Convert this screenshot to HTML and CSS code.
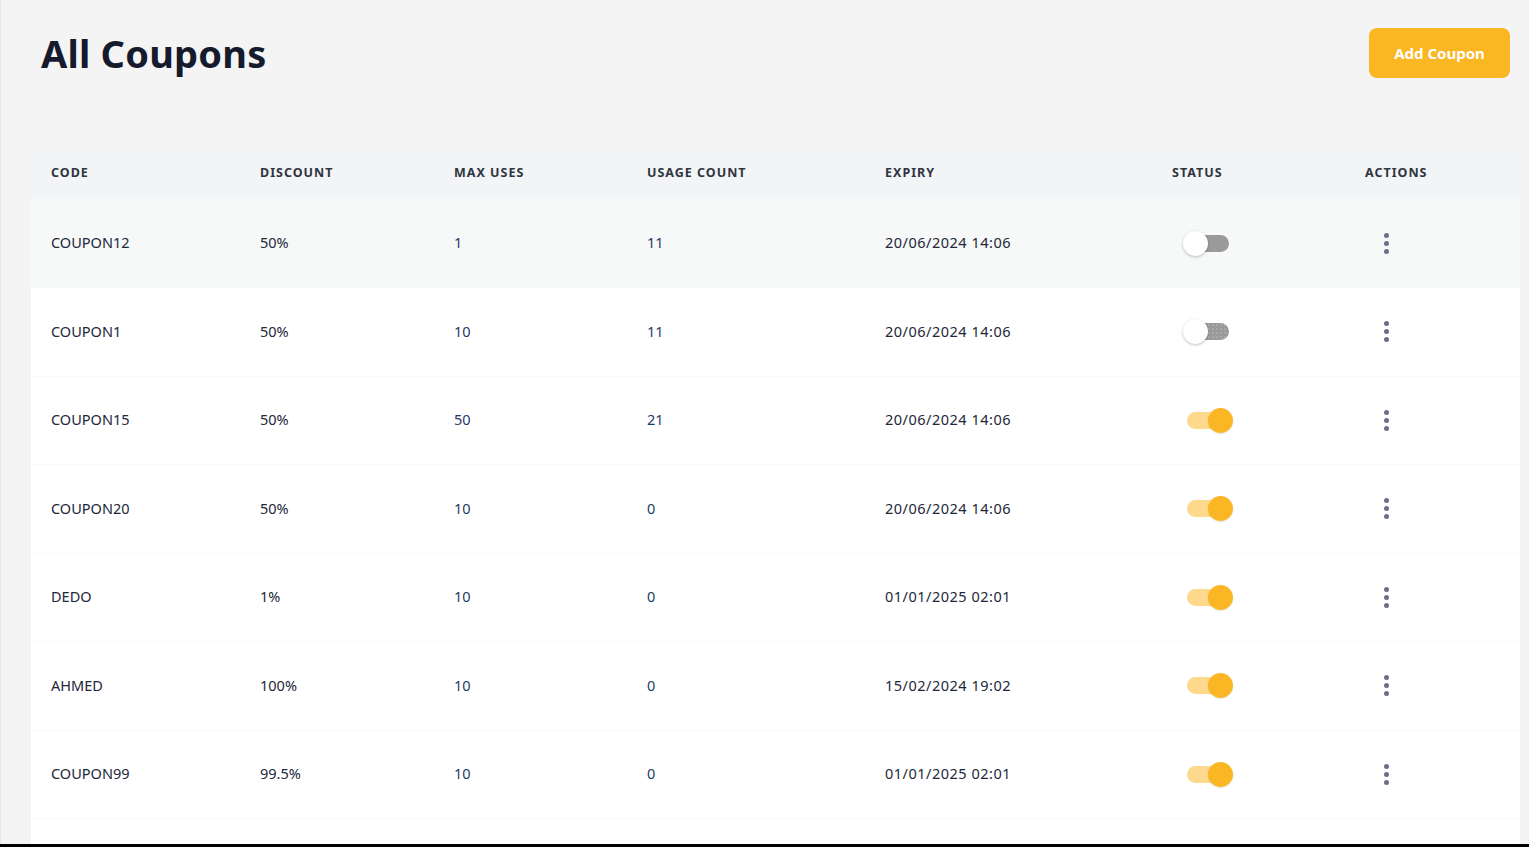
FILE: index.html
```html
<!DOCTYPE html>
<html>

<head>
    <meta charset="UTF-8">
    <title>All Coupons</title>
    <link rel="stylesheet" href="styles.css">
</head>

<body>
    <div class="page">
        <div class="pageHead">
            <h1>All Coupons</h1>
            <a href="javascript:;" class="addBtn">Add Coupon</a>
        </div>

        <div class="tableBox">
            <table class="couponTable">
                <thead>
                    <tr>
                        <th class="cCode">Code</th>
                        <th class="cDisc">Discount</th>
                        <th class="cMax">Max Uses</th>
                        <th class="cUse">Usage Count</th>
                        <th class="cExp">Expiry</th>
                        <th class="cStat">Status</th>
                        <th class="cAct">Actions</th>
                    </tr>
                </thead>
                <tbody>
                    <tr class="hover">
                        <td>COUPON12</td>
                        <td>50%</td>
                        <td class="num">1</td>
                        <td class="num">11</td>
                        <td class="date">20/06/2024 14:06</td>
                        <td><span class="switch"><span class="track"></span><span class="thumb"></span></span></td>
                        <td><span class="dots"><i></i><i></i><i></i></span></td>
                    </tr>
                    <tr>
                        <td>COUPON1</td>
                        <td>50%</td>
                        <td class="num">10</td>
                        <td class="num">11</td>
                        <td class="date">20/06/2024 14:06</td>
                        <td><span class="switch focus"><span class="track"></span><span class="thumb"></span></span></td>
                        <td><span class="dots"><i></i><i></i><i></i></span></td>
                    </tr>
                    <tr>
                        <td>COUPON15</td>
                        <td>50%</td>
                        <td class="num">50</td>
                        <td class="num">21</td>
                        <td class="date">20/06/2024 14:06</td>
                        <td><span class="switch on"><span class="track"></span><span class="thumb"></span></span></td>
                        <td><span class="dots"><i></i><i></i><i></i></span></td>
                    </tr>
                    <tr>
                        <td>COUPON20</td>
                        <td>50%</td>
                        <td class="num">10</td>
                        <td class="num">0</td>
                        <td class="date">20/06/2024 14:06</td>
                        <td><span class="switch on"><span class="track"></span><span class="thumb"></span></span></td>
                        <td><span class="dots"><i></i><i></i><i></i></span></td>
                    </tr>
                    <tr>
                        <td>DEDO</td>
                        <td>1%</td>
                        <td class="num">10</td>
                        <td class="num">0</td>
                        <td class="date">01/01/2025 02:01</td>
                        <td><span class="switch on"><span class="track"></span><span class="thumb"></span></span></td>
                        <td><span class="dots"><i></i><i></i><i></i></span></td>
                    </tr>
                    <tr>
                        <td>AHMED</td>
                        <td>100%</td>
                        <td class="num">10</td>
                        <td class="num">0</td>
                        <td class="date">15/02/2024 19:02</td>
                        <td><span class="switch on"><span class="track"></span><span class="thumb"></span></span></td>
                        <td><span class="dots"><i></i><i></i><i></i></span></td>
                    </tr>
                    <tr>
                        <td>COUPON99</td>
                        <td>99.5%</td>
                        <td class="num">10</td>
                        <td class="num">0</td>
                        <td class="date">01/01/2025 02:01</td>
                        <td><span class="switch on"><span class="track"></span><span class="thumb"></span></span></td>
                        <td><span class="dots"><i></i><i></i><i></i></span></td>
                    </tr>
                    <tr class="empty">
                        <td></td><td></td><td></td><td></td><td></td><td></td><td></td>
                    </tr>
                </tbody>
            </table>
        </div>
    </div>
</body>

</html>
```

FILE: styles.css
```css
* {
    margin: 0;
    padding: 0;
    box-sizing: border-box;
    text-decoration: none;
}

html {
    background-color: #000;
}

body {
    height: 844px;
    overflow: hidden;
    background-color: #f4f4f4;
    border-left: solid 1px #e6e8f0;
    font-family: "Noto Sans", "Open Sans", sans-serif;
    color: #1f2433;
}

.page {
    padding: 28px 9px 0 30px;
}

.pageHead {
    display: flex;
    justify-content: space-between;
    align-items: center;
    padding: 0 10px 0 10px;
    height: 50px;
}

.pageHead h1 {
    font-size: 38px;
    font-weight: 700;
    color: #161a2d;
    letter-spacing: 0.2px;
}

.addBtn {
    display: block;
    width: 141px;
    height: 50px;
    line-height: 50px;
    text-align: center;
    background-color: #fbb624;
    color: #fff;
    font-weight: 700;
    font-size: 15px;
    border-radius: 8px;
}

.tableBox {
    margin-top: 70px;
    background-color: #fff;
}

.couponTable {
    width: 100%;
    border-collapse: collapse;
    table-layout: fixed;
}

.couponTable th {
    height: 51px;
    padding: 0 0 3px 20px;
    background-color: #f3f4f6;
    text-align: left;
    font-size: 12.5px;
    font-weight: 700;
    letter-spacing: 1px;
    text-transform: uppercase;
    color: #2f3441;
}

.cCode { width: 209px; }
.cDisc { width: 194px; }
.cMax { width: 193px; }
.cUse { width: 238px; }
.cExp { width: 287px; }
.cStat { width: 193px; }

.couponTable td {
    height: 88.5px;
    padding: 0 0 2px 20px;
    font-size: 14.5px;
    color: #22273a;
    border-bottom: solid 1px #f8f8f9;
}

.couponTable td.num {
    color: #1c3a66;
}

.couponTable td.date {
    letter-spacing: 0.5px;
}

.couponTable tr.hover td {
    background-color: #f7f8f8;
}

/* switch */
.switch {
    position: relative;
    display: block;
    width: 50px;
    height: 25px;
    margin: 2px 0 0 11px;
}

.switch .track {
    position: absolute;
    left: 4px;
    top: 4px;
    width: 42px;
    height: 17px;
    border-radius: 9px;
    background-color: #9a9a9a;
}

.switch.focus .track {
    background-image: radial-gradient(#b8b8b8 0.6px, transparent 0.8px);
    background-size: 4px 4px;
}

.switch .thumb {
    position: absolute;
    left: 0;
    top: 0;
    width: 25px;
    height: 25px;
    border-radius: 50%;
    background-color: #fff;
    box-shadow: 0 1px 3px rgba(0, 0, 0, 0.25);
}

.switch.on .track {
    background-color: #fcd98c;
}

.switch.on .thumb {
    left: 25px;
    background-color: #fbb624;
    box-shadow: 0 1px 2px rgba(0, 0, 0, 0.1);
}

/* action dots */
.dots {
    display: flex;
    flex-direction: column;
    align-items: center;
    gap: 3px;
    width: 5px;
    margin: 2px 0 0 19px;
}

.dots i {
    display: block;
    width: 5px;
    height: 5px;
    border-radius: 50%;
    background-color: #6b6e86;
}
```
